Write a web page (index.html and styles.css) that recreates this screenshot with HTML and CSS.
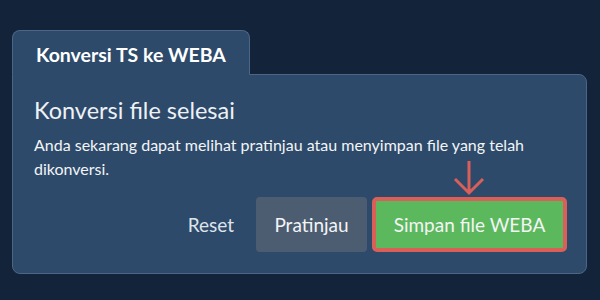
FILE: index.html
```html
<!doctype html>
<html>
  <head>
    <title>Konversi TS ke WEBA</title>
    <link rel="stylesheet" href="styles.css">
  </head>
  <body>
    <div class="converter">
      <div class="tab">Konversi TS ke WEBA</div>
      <div class="panel">
        <h2 class="panel-title">Konversi file selesai</h2>
        <p class="panel-text">
          Anda sekarang dapat melihat pratinjau atau menyimpan file yang telah
          dikonversi.
        </p>
        <div class="actions">
          <button class="btn btn-link">Reset</button>
          <button class="btn btn-gray">Pratinjau</button>
          <div class="highlight">
            <svg class="arrow" width="32" height="36" viewBox="0 0 32 36">
              <path d="M16 1 V33 M2 19 L16 33 L30 19" fill="none" stroke="#d95f58" stroke-width="3" />
            </svg>
            <button class="btn btn-green">Simpan file WEBA</button>
          </div>
        </div>
      </div>
    </div>
  </body>
</html>
```

FILE: styles.css
```css
body {
  margin: 0;
  padding: 30px 13px 0 12px;
  background-color: #13233a;
  font-family: Lato, "Open Sans", sans-serif;
  color: #f2f4f7;
}
.converter {
  display: flex;
  flex-direction: column;
  align-items: flex-start;
}
.tab {
  position: relative;
  z-index: 1;
  height: 45px;
  box-sizing: border-box;
  padding: 12px 23px 0 23px;
  margin-bottom: -1px;
  background-color: #2d4a6a;
  border: 1px solid #4b6686;
  border-bottom: 1px solid #2d4a6a;
  border-radius: 8px 8px 0 0;
  font-size: 19.5px;
  font-weight: bold;
  color: #ffffff;
}
.panel {
  align-self: stretch;
  height: 200px;
  box-sizing: border-box;
  padding: 20px 19px 0 21px;
  background-color: #2d4a6a;
  border: 1px solid #4b6686;
  border-radius: 0 8px 8px 8px;
}
.panel-title {
  margin: 0;
  font-size: 23.5px;
  font-weight: normal;
  color: #eef1f5;
  line-height: 30px;
}
.panel-text {
  margin: 8px 0 0 0;
  font-size: 16px;
  line-height: 24px;
  color: #f3f4f6;
}
.actions {
  display: flex;
  justify-content: flex-end;
  align-items: center;
  margin-top: 16px;
}
.btn {
  height: 55px;
  box-sizing: border-box;
  border: none;
  border-radius: 4px;
  font-family: Lato, "Open Sans", sans-serif;
  font-size: 19px;
  color: #f3f4f6;
  cursor: pointer;
}
.btn-link {
  background: none;
  padding: 0 22px 0 0;
  color: #dfe4ea;
}
.btn-gray {
  width: 111px;
  background-color: #4d5d71;
}
.highlight {
  position: relative;
  margin-left: 5px;
}
.btn-green {
  width: 195px;
  background-color: #5cb85c;
  border: 4px solid #d95f58;
  border-radius: 5px;
}
.arrow {
  position: absolute;
  left: 81px;
  top: -37px;
}
```
